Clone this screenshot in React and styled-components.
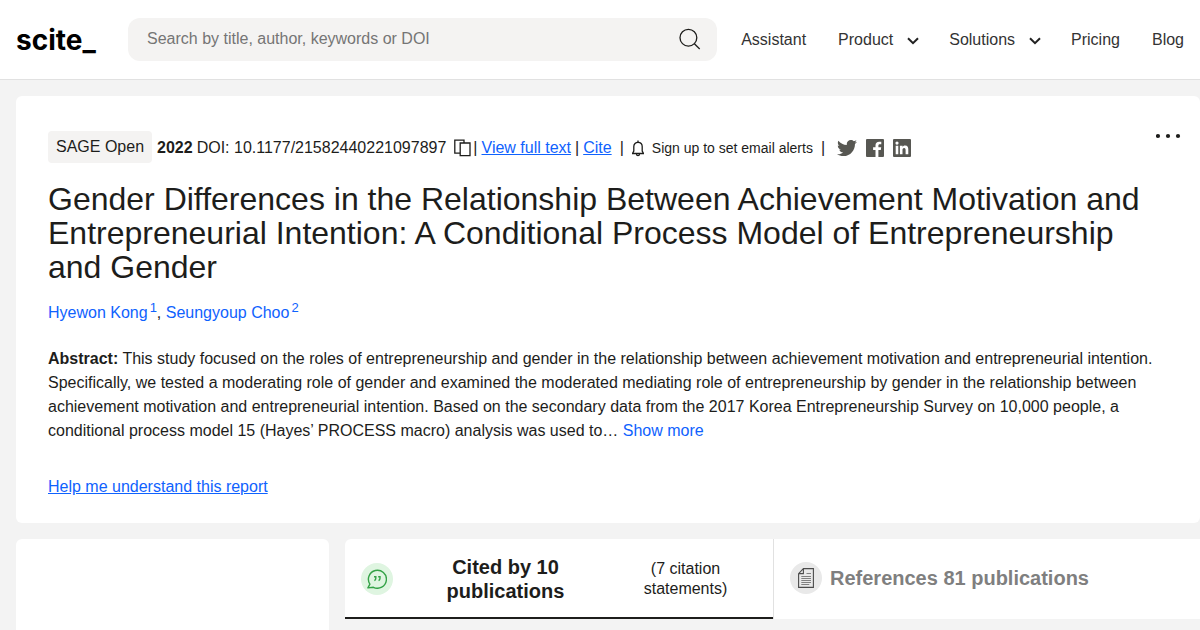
import React, { useState } from 'react';
import styled, { createGlobalStyle } from 'styled-components';
import { FaTwitter } from 'react-icons/fa';

const GlobalStyle = createGlobalStyle`
  * {
    box-sizing: border-box;
  }

  body {
    margin: 0;
    background: #f3f3f3;
    color: #1d1d1b;
    font-family: 'Liberation Sans', Arial, sans-serif;
    font-size: 16px;
    line-height: 24px;
  }
`;

const Layout = styled.div`
  display: flex;
  flex-direction: column;
  min-height: 100vh;
`;

const Header = styled.header`
  display: flex;
  align-items: center;
  height: 80px;
  padding: 0 16px;
  background: #fff;
  border-bottom: 1px solid #e1e1e1;
`;

const Logo = styled.a`
  width: 112px;
  flex-shrink: 0;
  color: #000;
  font-family: Inter, sans-serif;
  font-size: 28px;
  font-weight: 700;
  line-height: 40px;
  text-decoration: none;
`;

const SearchForm = styled.form`
  display: flex;
  flex: 1;
  align-items: center;
  height: 43px;
  padding: 0 16px 2px 19px;
  background: #f4f3f2;
  border-radius: 12px;
`;

const SearchInput = styled.input`
  flex: 1;
  min-width: 0;
  padding: 0;
  border: 0;
  outline: 0;
  background: transparent;
  color: #1d1d1b;
  font: inherit;

  &::placeholder {
    color: #757575;
  }
`;

const IconButton = styled.button`
  display: inline-flex;
  flex-shrink: 0;
  padding: 0;
  border: 0;
  background: transparent;
  color: inherit;
  cursor: pointer;
`;

const Nav = styled.nav`
  display: flex;
  gap: 32px;
  margin-left: 24px;
`;

const navItem = `
  color: #333;
  font: inherit;
  text-decoration: none;
`;

const NavLink = styled.a`
  ${navItem}
`;

const NavButton = styled.button`
  ${navItem}
  display: flex;
  align-items: center;
  gap: 14px;
  padding: 0;
  border: 0;
  background: transparent;
  cursor: pointer;

  svg {
    margin: 3px -2px 0 0;
  }
`;

const Page = styled.main`
  display: flex;
  flex: 1;
  flex-direction: column;
  gap: 16px;
  padding: 16px 0 0 16px;
`;

const Card = styled.section`
  padding: 35px 32px 24px;
  background: #fff;
  border-radius: 6px;
`;

const CardTop = styled.div`
  display: flex;
  align-items: flex-start;
  justify-content: space-between;
  margin-right: -16px;
`;

const Meta = styled.div`
  display: flex;
  align-items: center;
  gap: 4px;
  min-height: 34px;
  white-space: nowrap;
`;

const Journal = styled.span`
  align-self: flex-start;
  height: 32px;
  margin-right: 1px;
  padding: 4px 8px;
  line-height: 23px;
  background: #f4f3f2;
  border-radius: 4px;
`;

const TextLink = styled.a`
  color: #0f62fe;
  text-decoration: ${(props) => (props.$plain ? 'none' : 'underline')};
`;

const CopyGroup = styled.span`
  display: flex;
  align-items: center;
  gap: 2px;
  margin-left: 4px;
`;

const AlertButton = styled(IconButton)`
  align-items: center;
  gap: 8px;
  margin: 0 4px 0 8px;
  font: inherit;
  font-size: 14px;
`;

const AlertGroup = styled.span`
  display: flex;
  align-items: center;
  margin-left: 4px;
`;

const Socials = styled.span`
  display: flex;
  align-items: center;
  gap: 9px;
  margin-left: 8px;
  color: #575752;

  a {
    display: flex;
    color: inherit;
  }
`;

const Title = styled.h1`
  margin: 17px 0;
  font-size: 32px;
  font-weight: 400;
  line-height: 34px;
`;

const Authors = styled.div`
  margin-bottom: 22px;

  sup {
    margin-left: 2px;
    font-size: 13px;
    line-height: 0;
  }
`;

const Abstract = styled.p`
  margin: 0 0 32px;
`;

const LinkButton = styled.button`
  padding: 0;
  border: 0;
  background: transparent;
  color: #0f62fe;
  font: inherit;
  cursor: pointer;
`;

const Columns = styled.div`
  display: flex;
  flex: 1;
  gap: 16px;
`;

const Sidebar = styled.aside`
  width: 313px;
  flex-shrink: 0;
  background: #fff;
  border-radius: 6px 6px 0 0;
`;

const Tabs = styled.div`
  display: flex;
  flex: 1;
  align-self: flex-start;
  background: #fff;
  border-radius: 6px 0 0 0;
`;

const Tab = styled.button`
  display: flex;
  flex: 1 1 50%;
  align-items: center;
  min-width: 0;
  padding: ${(props) => (props.$active ? '16px' : '16px 16px 18px')};
  border: 0;
  background: transparent;
  box-shadow: ${(props) => (props.$active ? 'inset 0 -2px #1d1d1b' : 'none')};
  color: ${(props) => (props.$active ? '#1d1d1b' : '#7f7f7f')};
  font: inherit;
  cursor: pointer;

  & + & {
    flex-basis: calc(50% - 1px);
    border-left: 1px solid #e1e1e1;
  }
`;

const TabIcon = styled.span`
  display: flex;
  flex-shrink: 0;
  align-items: center;
  justify-content: center;
  width: 32px;
  height: 32px;
  margin-right: 8px;
  border-radius: 50%;
  background: ${(props) => props.$color};
`;

const TabTitle = styled.span`
  font-size: 20px;
  font-weight: 700;
  line-height: 24px;
`;

const TabNote = styled.span`
  margin-left: 4px;
  line-height: 20px;
`;

const SearchIcon = () => (
  <svg width="22" height="22" viewBox="0 0 22 22" fill="none" stroke="#1d1d1b" strokeWidth="1.3">
    <circle cx="9.4" cy="9.7" r="8.4" />
    <path d="M15.4 15.7 20.7 21" />
  </svg>
);

const Chevron = () => (
  <svg width="12" height="8" viewBox="0 0 12 8" fill="none" stroke="#222" strokeWidth="2">
    <path d="M1 1.2 6 6.2 11 1.2" />
  </svg>
);

const CopyIcon = () => (
  <svg width="17" height="18" viewBox="0 0 17 18" fill="none" stroke="#1d1d1b" strokeWidth="1.3">
    <path d="M6 14.2H.8V1.2H10V4" />
    <path d="M6.2 4H16V16.6H6.2z" />
  </svg>
);

const BellIcon = () => (
  <svg width="12" height="17" viewBox="0 0 12 17" fill="none" stroke="#1d1d1b" strokeWidth="1.3">
    <path d="M6 .5v1.7" />
    <path d="M1.8 11V6.5C1.8 4 3.6 2.3 6 2.3s4.2 1.7 4.2 4.2V11l1.3 2.5H.5z" />
    <path d="M4.5 13.7c0 2.5 3 2.5 3 0" />
  </svg>
);

const FacebookIcon = () => (
  <svg width="18" height="18" viewBox="0 0 18 18" fill="currentColor">
    <path d="M1 0h16a1 1 0 0 1 1 1v16a1 1 0 0 1-1 1h-4.6v-6.9h2.4l.4-2.8h-2.8V6.6c0-.8.3-1.4 1.4-1.4h1.5V2.8c-.3 0-1.2-.1-2.2-.1-2.2 0-3.6 1.3-3.6 3.7v1.9H7.1v2.8h2.4V18H1a1 1 0 0 1-1-1V1a1 1 0 0 1 1-1z" />
  </svg>
);

const LinkedinIcon = () => (
  <svg width="18" height="18" viewBox="0 0 18 18" fill="currentColor">
    <path
      fillRule="evenodd"
      d="M1 0h16a1 1 0 0 1 1 1v16a1 1 0 0 1-1 1H1a1 1 0 0 1-1-1V1a1 1 0 0 1 1-1zM2.7 6.8v8.5h2.6V6.8zM4 2.5a1.6 1.6 0 1 0 0 3.2 1.6 1.6 0 0 0 0-3.2zM6.9 6.8v8.5h2.6v-4.2c0-1.2.3-2.2 1.6-2.2s1.5 1.2 1.5 2.2v4.2h2.7v-4.7c0-2.3-.5-4-3.2-4-1.3 0-2.2.7-2.5 1.4V6.8z"
    />
  </svg>
);

const DotsIcon = () => (
  <svg width="28" height="10" viewBox="0 0 28 10" fill="#1d1d1b">
    <circle cx="2" cy="5" r="2.1" />
    <circle cx="12" cy="5" r="2.1" />
    <circle cx="22" cy="5" r="2.1" />
  </svg>
);

const QuoteIcon = () => (
  <svg width="20" height="20" viewBox="0 0 20 20" fill="none" stroke="#33a246" strokeWidth="1.4">
    <path d="M2.9 15.2A9 9 0 1 1 6.4 18.3L.9 18.9z" strokeLinejoin="round" />
    <path d="M7 7.8h1.8v1.4c0 1.3-.4 1.9-1.4 2.5M11.2 7.8H13v1.4c0 1.3-.4 1.9-1.4 2.5" />
  </svg>
);

const DocumentIcon = () => (
  <svg width="16" height="20" viewBox="0 0 16 20" fill="none" stroke="#4c4c4c" strokeWidth="1.1">
    <path d="M5.4.6h10v18.8H.6V5.6zM5.4.6v5H.6" />
    <path d="M8.5 5.5h4.5M3.3 8.5H13M3.3 10.5H13M3.3 12.5H13M3.3 14.5H13M3.3 16.5h8" stroke="#808080" />
  </svg>
);

const App = () => {
  const [query, setQuery] = useState('');

  return (
    <Layout>
      <GlobalStyle />
      <Header>
        <Logo href="#">scite_</Logo>
        <SearchForm role="search" onSubmit={(e) => e.preventDefault()}>
          <SearchInput
            type="text"
            aria-label="Search"
            placeholder="Search by title, author, keywords or DOI"
            value={query}
            onChange={(e) => setQuery(e.target.value)}
          />
          <IconButton type="submit" aria-label="Submit search">
            <SearchIcon />
          </IconButton>
        </SearchForm>
        <Nav>
          <NavLink href="#">Assistant</NavLink>
          <NavButton type="button">Product <Chevron /></NavButton>
          <NavButton type="button">Solutions <Chevron /></NavButton>
          <NavLink href="#">Pricing</NavLink>
          <NavLink href="#">Blog</NavLink>
        </Nav>
      </Header>

      <Page>
        <Card>
          <CardTop>
            <Meta>
              <Journal>SAGE Open</Journal>
              <strong>2022</strong>
              <span>DOI: 10.1177/21582440221097897</span>
              <CopyGroup>
                <IconButton type="button" aria-label="Copy DOI"><CopyIcon /></IconButton>
                <span>|</span>
              </CopyGroup>
              <TextLink href="#">View full text</TextLink>
              <span>|</span>
              <TextLink href="#">Cite</TextLink>
              <AlertGroup>
                <span>|</span>
                <AlertButton type="button">
                  <BellIcon />
                  Sign up to set email alerts
                </AlertButton>
              </AlertGroup>
              <span>|</span>
              <Socials>
                <a href="#" aria-label="Twitter"><FaTwitter size={20} /></a>
                <a href="#" aria-label="Facebook"><FacebookIcon /></a>
                <a href="#" aria-label="LinkedIn"><LinkedinIcon /></a>
              </Socials>
            </Meta>
            <IconButton type="button" aria-label="More options"><DotsIcon /></IconButton>
          </CardTop>

          <Title>
            Gender Differences in the Relationship Between Achievement Motivation and Entrepreneurial
            Intention: A Conditional Process Model of Entrepreneurship and Gender
          </Title>

          <Authors>
            <TextLink href="#" $plain>Hyewon Kong<sup>1</sup></TextLink>
            {', '}
            <TextLink href="#" $plain>Seungyoup Choo<sup>2</sup></TextLink>
          </Authors>

          <Abstract>
            <strong>Abstract:</strong> This study focused on the roles of entrepreneurship and gender in the
            relationship between achievement motivation and entrepreneurial intention. Specifically, we
            tested a moderating role of gender and examined the moderated mediating role of
            entrepreneurship by gender in the relationship between achievement motivation and
            entrepreneurial intention. Based on the secondary data from the 2017 Korea Entrepreneurship
            Survey on 10,000 people, a conditional process model 15 (Hayes’ PROCESS macro) analysis was
            used to… <LinkButton type="button">Show more</LinkButton>
          </Abstract>

          <TextLink href="#">Help me understand this report</TextLink>
        </Card>

        <Columns>
          <Sidebar />
          <Tabs role="tablist">
            <Tab type="button" role="tab" aria-selected="true" $active>
              <TabIcon $color="#dff5e1"><QuoteIcon /></TabIcon>
              <TabTitle>Cited by 10 publications</TabTitle>
              <TabNote>(7 citation statements)</TabNote>
            </Tab>
            <Tab type="button" role="tab" aria-selected="false">
              <TabIcon $color="#e9e9e9"><DocumentIcon /></TabIcon>
              <TabTitle>References 81 publications</TabTitle>
            </Tab>
          </Tabs>
        </Columns>
      </Page>
    </Layout>
  );
};

export default App;
